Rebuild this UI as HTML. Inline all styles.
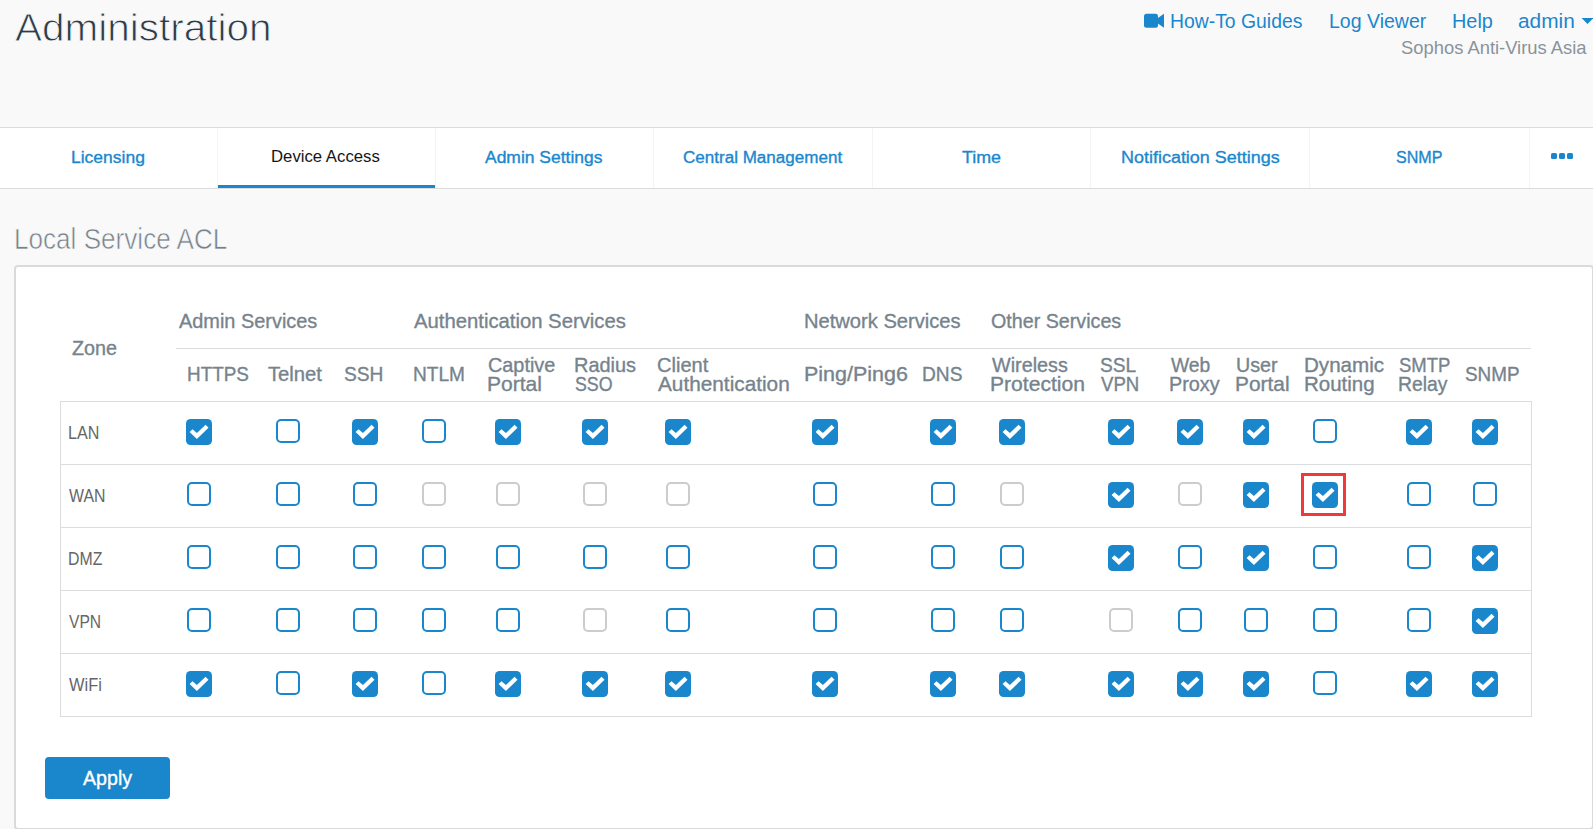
<!DOCTYPE html>
<html><head><meta charset="utf-8"><title>Administration - Device Access</title>
<style>
html,body{margin:0;padding:0;}
body{width:1593px;height:829px;overflow:hidden;position:relative;background:#f9f9f9;font-family:"Liberation Sans",sans-serif;}
.t{position:absolute;line-height:1;white-space:nowrap;transform-origin:0 0;}
.hdr-line{position:absolute;left:0;top:127px;width:1593px;height:1px;background:#dcdcdc;}
.tabs{position:absolute;left:0;top:128px;width:1593px;height:60px;background:#fff;}
.tabs-b{position:absolute;left:0;top:188px;width:1593px;height:1px;background:#dcdcdc;}
.sep{position:absolute;top:128px;width:1px;height:60px;background:#f4f4f4;}
.active{position:absolute;left:218px;top:185px;width:217px;height:3px;background:#1a87cd;}
.dot{position:absolute;top:153px;width:6px;height:6px;border-radius:1.5px;background:#1a87cd;}
.panel{position:absolute;left:14px;top:265px;width:1576px;height:561px;border:2px solid #d8dbde;border-radius:4px;background:#fff;}
.gl{position:absolute;left:176px;top:348px;width:1355px;height:1px;background:#d9dde0;}
.tbl{position:absolute;left:60px;top:401px;width:1470px;height:314px;border:1px solid #d9dde0;}
.rl{position:absolute;left:61px;width:1470px;height:1px;background:#d9dde0;}
.cb{position:absolute;display:block;}
.ub{position:absolute;width:20px;height:20px;border:2px solid #1a87cd;border-radius:5px;box-sizing:content-box;}
.red{position:absolute;left:1301px;top:473px;width:39px;height:37px;border:3px solid #f03a3a;}
.btn{position:absolute;left:45px;top:757px;width:125px;height:42px;border-radius:4px;background:#1a87cd;}
</style></head><body>
<div class="hdr-line"></div>
<div class="tabs"></div>
<div class="sep" style="left:217px"></div><div class="sep" style="left:435px"></div><div class="sep" style="left:653px"></div><div class="sep" style="left:872px"></div><div class="sep" style="left:1090px"></div><div class="sep" style="left:1309px"></div><div class="sep" style="left:1529px"></div>
<div class="tabs-b"></div>
<div class="active"></div>
<div class="dot" style="left:1551px"></div><div class="dot" style="left:1559px"></div><div class="dot" style="left:1567px"></div>
<svg style="position:absolute;left:0;top:0" width="1593" height="40"><rect x="1144" y="13.8" width="14" height="14" rx="2.5" fill="#1a87cd"/><polygon points="1157.5,18.3 1164,13.8 1164,27.8 1157.5,23.2" fill="#1a87cd"/><polygon points="1581.6,18.1 1593.4,18.1 1587.5,24.1" fill="#1a87cd"/></svg>
<div class="panel"></div>
<div class="gl"></div>
<div class="tbl"></div>
<div class="rl" style="top:464px"></div><div class="rl" style="top:527px"></div><div class="rl" style="top:590px"></div><div class="rl" style="top:653px"></div>
<svg class="cb" style="left:186px;top:419px" width="26" height="26" viewBox="0 0 26 26"><rect x="0" y="0" width="26" height="26" rx="4.6" fill="#1a87cd"/><polygon points="3.6,13.1 6.5,10.2 10.9,14.0 19.6,5.8 22.5,8.7 10.9,20.1" fill="#fff"/></svg>
<div class="ub" style="left:276px;top:419px;border-color:#1a87cd"></div>
<svg class="cb" style="left:352px;top:419px" width="26" height="26" viewBox="0 0 26 26"><rect x="0" y="0" width="26" height="26" rx="4.6" fill="#1a87cd"/><polygon points="3.6,13.1 6.5,10.2 10.9,14.0 19.6,5.8 22.5,8.7 10.9,20.1" fill="#fff"/></svg>
<div class="ub" style="left:422px;top:419px;border-color:#1a87cd"></div>
<svg class="cb" style="left:495px;top:419px" width="26" height="26" viewBox="0 0 26 26"><rect x="0" y="0" width="26" height="26" rx="4.6" fill="#1a87cd"/><polygon points="3.6,13.1 6.5,10.2 10.9,14.0 19.6,5.8 22.5,8.7 10.9,20.1" fill="#fff"/></svg>
<svg class="cb" style="left:582px;top:419px" width="26" height="26" viewBox="0 0 26 26"><rect x="0" y="0" width="26" height="26" rx="4.6" fill="#1a87cd"/><polygon points="3.6,13.1 6.5,10.2 10.9,14.0 19.6,5.8 22.5,8.7 10.9,20.1" fill="#fff"/></svg>
<svg class="cb" style="left:665px;top:419px" width="26" height="26" viewBox="0 0 26 26"><rect x="0" y="0" width="26" height="26" rx="4.6" fill="#1a87cd"/><polygon points="3.6,13.1 6.5,10.2 10.9,14.0 19.6,5.8 22.5,8.7 10.9,20.1" fill="#fff"/></svg>
<svg class="cb" style="left:812px;top:419px" width="26" height="26" viewBox="0 0 26 26"><rect x="0" y="0" width="26" height="26" rx="4.6" fill="#1a87cd"/><polygon points="3.6,13.1 6.5,10.2 10.9,14.0 19.6,5.8 22.5,8.7 10.9,20.1" fill="#fff"/></svg>
<svg class="cb" style="left:930px;top:419px" width="26" height="26" viewBox="0 0 26 26"><rect x="0" y="0" width="26" height="26" rx="4.6" fill="#1a87cd"/><polygon points="3.6,13.1 6.5,10.2 10.9,14.0 19.6,5.8 22.5,8.7 10.9,20.1" fill="#fff"/></svg>
<svg class="cb" style="left:999px;top:419px" width="26" height="26" viewBox="0 0 26 26"><rect x="0" y="0" width="26" height="26" rx="4.6" fill="#1a87cd"/><polygon points="3.6,13.1 6.5,10.2 10.9,14.0 19.6,5.8 22.5,8.7 10.9,20.1" fill="#fff"/></svg>
<svg class="cb" style="left:1108px;top:419px" width="26" height="26" viewBox="0 0 26 26"><rect x="0" y="0" width="26" height="26" rx="4.6" fill="#1a87cd"/><polygon points="3.6,13.1 6.5,10.2 10.9,14.0 19.6,5.8 22.5,8.7 10.9,20.1" fill="#fff"/></svg>
<svg class="cb" style="left:1177px;top:419px" width="26" height="26" viewBox="0 0 26 26"><rect x="0" y="0" width="26" height="26" rx="4.6" fill="#1a87cd"/><polygon points="3.6,13.1 6.5,10.2 10.9,14.0 19.6,5.8 22.5,8.7 10.9,20.1" fill="#fff"/></svg>
<svg class="cb" style="left:1243px;top:419px" width="26" height="26" viewBox="0 0 26 26"><rect x="0" y="0" width="26" height="26" rx="4.6" fill="#1a87cd"/><polygon points="3.6,13.1 6.5,10.2 10.9,14.0 19.6,5.8 22.5,8.7 10.9,20.1" fill="#fff"/></svg>
<div class="ub" style="left:1313px;top:419px;border-color:#1a87cd"></div>
<svg class="cb" style="left:1406px;top:419px" width="26" height="26" viewBox="0 0 26 26"><rect x="0" y="0" width="26" height="26" rx="4.6" fill="#1a87cd"/><polygon points="3.6,13.1 6.5,10.2 10.9,14.0 19.6,5.8 22.5,8.7 10.9,20.1" fill="#fff"/></svg>
<svg class="cb" style="left:1472px;top:419px" width="26" height="26" viewBox="0 0 26 26"><rect x="0" y="0" width="26" height="26" rx="4.6" fill="#1a87cd"/><polygon points="3.6,13.1 6.5,10.2 10.9,14.0 19.6,5.8 22.5,8.7 10.9,20.1" fill="#fff"/></svg>
<div class="ub" style="left:187px;top:482px;border-color:#1a87cd"></div>
<div class="ub" style="left:276px;top:482px;border-color:#1a87cd"></div>
<div class="ub" style="left:353px;top:482px;border-color:#1a87cd"></div>
<div class="ub" style="left:422px;top:482px;border-color:#cccccc"></div>
<div class="ub" style="left:496px;top:482px;border-color:#cccccc"></div>
<div class="ub" style="left:583px;top:482px;border-color:#cccccc"></div>
<div class="ub" style="left:666px;top:482px;border-color:#cccccc"></div>
<div class="ub" style="left:813px;top:482px;border-color:#1a87cd"></div>
<div class="ub" style="left:931px;top:482px;border-color:#1a87cd"></div>
<div class="ub" style="left:1000px;top:482px;border-color:#cccccc"></div>
<svg class="cb" style="left:1108px;top:482px" width="26" height="26" viewBox="0 0 26 26"><rect x="0" y="0" width="26" height="26" rx="4.6" fill="#1a87cd"/><polygon points="3.6,13.1 6.5,10.2 10.9,14.0 19.6,5.8 22.5,8.7 10.9,20.1" fill="#fff"/></svg>
<div class="ub" style="left:1178px;top:482px;border-color:#cccccc"></div>
<svg class="cb" style="left:1243px;top:482px" width="26" height="26" viewBox="0 0 26 26"><rect x="0" y="0" width="26" height="26" rx="4.6" fill="#1a87cd"/><polygon points="3.6,13.1 6.5,10.2 10.9,14.0 19.6,5.8 22.5,8.7 10.9,20.1" fill="#fff"/></svg>
<svg class="cb" style="left:1312px;top:482px" width="26" height="26" viewBox="0 0 26 26"><rect x="0" y="0" width="26" height="26" rx="4.6" fill="#1a87cd"/><polygon points="3.6,13.1 6.5,10.2 10.9,14.0 19.6,5.8 22.5,8.7 10.9,20.1" fill="#fff"/></svg>
<div class="ub" style="left:1407px;top:482px;border-color:#1a87cd"></div>
<div class="ub" style="left:1473px;top:482px;border-color:#1a87cd"></div>
<div class="ub" style="left:187px;top:545px;border-color:#1a87cd"></div>
<div class="ub" style="left:276px;top:545px;border-color:#1a87cd"></div>
<div class="ub" style="left:353px;top:545px;border-color:#1a87cd"></div>
<div class="ub" style="left:422px;top:545px;border-color:#1a87cd"></div>
<div class="ub" style="left:496px;top:545px;border-color:#1a87cd"></div>
<div class="ub" style="left:583px;top:545px;border-color:#1a87cd"></div>
<div class="ub" style="left:666px;top:545px;border-color:#1a87cd"></div>
<div class="ub" style="left:813px;top:545px;border-color:#1a87cd"></div>
<div class="ub" style="left:931px;top:545px;border-color:#1a87cd"></div>
<div class="ub" style="left:1000px;top:545px;border-color:#1a87cd"></div>
<svg class="cb" style="left:1108px;top:545px" width="26" height="26" viewBox="0 0 26 26"><rect x="0" y="0" width="26" height="26" rx="4.6" fill="#1a87cd"/><polygon points="3.6,13.1 6.5,10.2 10.9,14.0 19.6,5.8 22.5,8.7 10.9,20.1" fill="#fff"/></svg>
<div class="ub" style="left:1178px;top:545px;border-color:#1a87cd"></div>
<svg class="cb" style="left:1243px;top:545px" width="26" height="26" viewBox="0 0 26 26"><rect x="0" y="0" width="26" height="26" rx="4.6" fill="#1a87cd"/><polygon points="3.6,13.1 6.5,10.2 10.9,14.0 19.6,5.8 22.5,8.7 10.9,20.1" fill="#fff"/></svg>
<div class="ub" style="left:1313px;top:545px;border-color:#1a87cd"></div>
<div class="ub" style="left:1407px;top:545px;border-color:#1a87cd"></div>
<svg class="cb" style="left:1472px;top:545px" width="26" height="26" viewBox="0 0 26 26"><rect x="0" y="0" width="26" height="26" rx="4.6" fill="#1a87cd"/><polygon points="3.6,13.1 6.5,10.2 10.9,14.0 19.6,5.8 22.5,8.7 10.9,20.1" fill="#fff"/></svg>
<div class="ub" style="left:187px;top:608px;border-color:#1a87cd"></div>
<div class="ub" style="left:276px;top:608px;border-color:#1a87cd"></div>
<div class="ub" style="left:353px;top:608px;border-color:#1a87cd"></div>
<div class="ub" style="left:422px;top:608px;border-color:#1a87cd"></div>
<div class="ub" style="left:496px;top:608px;border-color:#1a87cd"></div>
<div class="ub" style="left:583px;top:608px;border-color:#cccccc"></div>
<div class="ub" style="left:666px;top:608px;border-color:#1a87cd"></div>
<div class="ub" style="left:813px;top:608px;border-color:#1a87cd"></div>
<div class="ub" style="left:931px;top:608px;border-color:#1a87cd"></div>
<div class="ub" style="left:1000px;top:608px;border-color:#1a87cd"></div>
<div class="ub" style="left:1109px;top:608px;border-color:#cccccc"></div>
<div class="ub" style="left:1178px;top:608px;border-color:#1a87cd"></div>
<div class="ub" style="left:1244px;top:608px;border-color:#1a87cd"></div>
<div class="ub" style="left:1313px;top:608px;border-color:#1a87cd"></div>
<div class="ub" style="left:1407px;top:608px;border-color:#1a87cd"></div>
<svg class="cb" style="left:1472px;top:608px" width="26" height="26" viewBox="0 0 26 26"><rect x="0" y="0" width="26" height="26" rx="4.6" fill="#1a87cd"/><polygon points="3.6,13.1 6.5,10.2 10.9,14.0 19.6,5.8 22.5,8.7 10.9,20.1" fill="#fff"/></svg>
<svg class="cb" style="left:186px;top:671px" width="26" height="26" viewBox="0 0 26 26"><rect x="0" y="0" width="26" height="26" rx="4.6" fill="#1a87cd"/><polygon points="3.6,13.1 6.5,10.2 10.9,14.0 19.6,5.8 22.5,8.7 10.9,20.1" fill="#fff"/></svg>
<div class="ub" style="left:276px;top:671px;border-color:#1a87cd"></div>
<svg class="cb" style="left:352px;top:671px" width="26" height="26" viewBox="0 0 26 26"><rect x="0" y="0" width="26" height="26" rx="4.6" fill="#1a87cd"/><polygon points="3.6,13.1 6.5,10.2 10.9,14.0 19.6,5.8 22.5,8.7 10.9,20.1" fill="#fff"/></svg>
<div class="ub" style="left:422px;top:671px;border-color:#1a87cd"></div>
<svg class="cb" style="left:495px;top:671px" width="26" height="26" viewBox="0 0 26 26"><rect x="0" y="0" width="26" height="26" rx="4.6" fill="#1a87cd"/><polygon points="3.6,13.1 6.5,10.2 10.9,14.0 19.6,5.8 22.5,8.7 10.9,20.1" fill="#fff"/></svg>
<svg class="cb" style="left:582px;top:671px" width="26" height="26" viewBox="0 0 26 26"><rect x="0" y="0" width="26" height="26" rx="4.6" fill="#1a87cd"/><polygon points="3.6,13.1 6.5,10.2 10.9,14.0 19.6,5.8 22.5,8.7 10.9,20.1" fill="#fff"/></svg>
<svg class="cb" style="left:665px;top:671px" width="26" height="26" viewBox="0 0 26 26"><rect x="0" y="0" width="26" height="26" rx="4.6" fill="#1a87cd"/><polygon points="3.6,13.1 6.5,10.2 10.9,14.0 19.6,5.8 22.5,8.7 10.9,20.1" fill="#fff"/></svg>
<svg class="cb" style="left:812px;top:671px" width="26" height="26" viewBox="0 0 26 26"><rect x="0" y="0" width="26" height="26" rx="4.6" fill="#1a87cd"/><polygon points="3.6,13.1 6.5,10.2 10.9,14.0 19.6,5.8 22.5,8.7 10.9,20.1" fill="#fff"/></svg>
<svg class="cb" style="left:930px;top:671px" width="26" height="26" viewBox="0 0 26 26"><rect x="0" y="0" width="26" height="26" rx="4.6" fill="#1a87cd"/><polygon points="3.6,13.1 6.5,10.2 10.9,14.0 19.6,5.8 22.5,8.7 10.9,20.1" fill="#fff"/></svg>
<svg class="cb" style="left:999px;top:671px" width="26" height="26" viewBox="0 0 26 26"><rect x="0" y="0" width="26" height="26" rx="4.6" fill="#1a87cd"/><polygon points="3.6,13.1 6.5,10.2 10.9,14.0 19.6,5.8 22.5,8.7 10.9,20.1" fill="#fff"/></svg>
<svg class="cb" style="left:1108px;top:671px" width="26" height="26" viewBox="0 0 26 26"><rect x="0" y="0" width="26" height="26" rx="4.6" fill="#1a87cd"/><polygon points="3.6,13.1 6.5,10.2 10.9,14.0 19.6,5.8 22.5,8.7 10.9,20.1" fill="#fff"/></svg>
<svg class="cb" style="left:1177px;top:671px" width="26" height="26" viewBox="0 0 26 26"><rect x="0" y="0" width="26" height="26" rx="4.6" fill="#1a87cd"/><polygon points="3.6,13.1 6.5,10.2 10.9,14.0 19.6,5.8 22.5,8.7 10.9,20.1" fill="#fff"/></svg>
<svg class="cb" style="left:1243px;top:671px" width="26" height="26" viewBox="0 0 26 26"><rect x="0" y="0" width="26" height="26" rx="4.6" fill="#1a87cd"/><polygon points="3.6,13.1 6.5,10.2 10.9,14.0 19.6,5.8 22.5,8.7 10.9,20.1" fill="#fff"/></svg>
<div class="ub" style="left:1313px;top:671px;border-color:#1a87cd"></div>
<svg class="cb" style="left:1406px;top:671px" width="26" height="26" viewBox="0 0 26 26"><rect x="0" y="0" width="26" height="26" rx="4.6" fill="#1a87cd"/><polygon points="3.6,13.1 6.5,10.2 10.9,14.0 19.6,5.8 22.5,8.7 10.9,20.1" fill="#fff"/></svg>
<svg class="cb" style="left:1472px;top:671px" width="26" height="26" viewBox="0 0 26 26"><rect x="0" y="0" width="26" height="26" rx="4.6" fill="#1a87cd"/><polygon points="3.6,13.1 6.5,10.2 10.9,14.0 19.6,5.8 22.5,8.7 10.9,20.1" fill="#fff"/></svg>
<div class="red"></div>
<div class="btn"></div>
<div class="t" style="left:14.80px;top:9px;font-size:38.84px;color:#2b3c4a;transform:scaleX(1.0426);-webkit-text-stroke:0.9px #f9f9f9;">Administration</div>
<div class="t" style="left:1170.05px;top:12px;font-size:19.86px;color:#1a87cd;transform:scaleX(0.9750);">How-To Guides</div>
<div class="t" style="left:1328.74px;top:12px;font-size:19.71px;color:#1a87cd;transform:scaleX(0.9915);">Log Viewer</div>
<div class="t" style="left:1451.71px;top:12px;font-size:19.71px;color:#1a87cd;transform:scaleX(1.0092);">Help</div>
<div class="t" style="left:1517.67px;top:12px;font-size:19.71px;color:#1a87cd;transform:scaleX(1.0582);">admin</div>
<div class="t" style="left:1401.16px;top:39px;font-size:18.55px;color:#89939b;transform:scaleX(0.9915);">Sophos Anti-Virus Asia</div>
<div class="t" style="left:71.20px;top:149px;font-size:17.25px;color:#1a87cd;transform:scaleX(1.0139);-webkit-text-stroke:0.35px;">Licensing</div>
<div class="t" style="left:271.36px;top:148px;font-size:17.10px;color:#151515;transform:scaleX(0.9786);">Device Access</div>
<div class="t" style="left:485.30px;top:149px;font-size:17.25px;color:#1a87cd;transform:scaleX(1.0123);-webkit-text-stroke:0.35px;">Admin Settings</div>
<div class="t" style="left:682.75px;top:149px;font-size:17.25px;color:#1a87cd;transform:scaleX(0.9880);-webkit-text-stroke:0.35px;">Central Management</div>
<div class="t" style="left:962.14px;top:149px;font-size:17.25px;color:#1a87cd;transform:scaleX(1.0350);-webkit-text-stroke:0.35px;">Time</div>
<div class="t" style="left:1120.86px;top:149px;font-size:17.25px;color:#1a87cd;transform:scaleX(1.0410);-webkit-text-stroke:0.35px;">Notification Settings</div>
<div class="t" style="left:1396.36px;top:149px;font-size:17.25px;color:#1a87cd;transform:scaleX(0.9312);-webkit-text-stroke:0.35px;">SNMP</div>
<div class="t" style="left:13.81px;top:225px;font-size:28.99px;color:#75828c;transform:scaleX(0.9007);-webkit-text-stroke:0.6px #f9f9f9;">Local Service ACL</div>
<div class="t" style="left:71.71px;top:338px;font-size:20.43px;color:#76838d;transform:scaleX(0.9663);-webkit-text-stroke:0.35px;">Zone</div>
<div class="t" style="left:179.20px;top:310px;font-size:21.01px;color:#76838d;transform:scaleX(0.9480);-webkit-text-stroke:0.35px;">Admin Services</div>
<div class="t" style="left:414.30px;top:310px;font-size:21.01px;color:#76838d;transform:scaleX(0.9654);-webkit-text-stroke:0.35px;">Authentication Services</div>
<div class="t" style="left:803.79px;top:310px;font-size:21.01px;color:#76838d;transform:scaleX(0.9586);-webkit-text-stroke:0.35px;">Network Services</div>
<div class="t" style="left:991.41px;top:310px;font-size:21.01px;color:#76838d;transform:scaleX(0.9374);-webkit-text-stroke:0.35px;">Other Services</div>
<div class="t" style="left:187.19px;top:364px;font-size:20.29px;color:#76838d;transform:scaleX(0.9309);-webkit-text-stroke:0.35px;">HTTPS</div>
<div class="t" style="left:267.90px;top:364px;font-size:20.29px;color:#76838d;transform:scaleX(0.9966);-webkit-text-stroke:0.35px;">Telnet</div>
<div class="t" style="left:344.43px;top:364px;font-size:20.29px;color:#76838d;transform:scaleX(0.9457);-webkit-text-stroke:0.35px;">SSH</div>
<div class="t" style="left:413.27px;top:364px;font-size:20.29px;color:#76838d;transform:scaleX(0.9400);-webkit-text-stroke:0.35px;">NTLM</div>
<div class="t" style="left:803.98px;top:364px;font-size:20.29px;color:#76838d;transform:scaleX(1.0586);-webkit-text-stroke:0.35px;">Ping/Ping6</div>
<div class="t" style="left:922.07px;top:364px;font-size:20.29px;color:#76838d;transform:scaleX(0.9440);-webkit-text-stroke:0.35px;">DNS</div>
<div class="t" style="left:1464.54px;top:364px;font-size:20.29px;color:#76838d;transform:scaleX(0.9304);-webkit-text-stroke:0.35px;">SNMP</div>
<div class="t" style="left:487.61px;top:355px;font-size:20.29px;color:#76838d;transform:scaleX(0.9784);-webkit-text-stroke:0.35px;">Captive</div>
<div class="t" style="left:486.92px;top:374px;font-size:20.29px;color:#76838d;transform:scaleX(1.0375);-webkit-text-stroke:0.35px;">Portal</div>
<div class="t" style="left:574.11px;top:355px;font-size:20.29px;color:#76838d;transform:scaleX(0.9815);-webkit-text-stroke:0.35px;">Radius</div>
<div class="t" style="left:574.99px;top:374px;font-size:20.29px;color:#76838d;transform:scaleX(0.8766);-webkit-text-stroke:0.35px;">SSO</div>
<div class="t" style="left:657.40px;top:355px;font-size:20.29px;color:#76838d;transform:scaleX(0.9881);-webkit-text-stroke:0.35px;">Client</div>
<div class="t" style="left:658.40px;top:374px;font-size:20.29px;color:#76838d;transform:scaleX(1.0247);-webkit-text-stroke:0.35px;">Authentication</div>
<div class="t" style="left:992.10px;top:355px;font-size:20.29px;color:#76838d;transform:scaleX(0.9757);-webkit-text-stroke:0.35px;">Wireless</div>
<div class="t" style="left:990.41px;top:374px;font-size:20.29px;color:#76838d;transform:scaleX(1.0396);-webkit-text-stroke:0.35px;">Protection</div>
<div class="t" style="left:1100.33px;top:355px;font-size:20.29px;color:#76838d;transform:scaleX(0.9430);-webkit-text-stroke:0.35px;">SSL</div>
<div class="t" style="left:1101.10px;top:374px;font-size:20.29px;color:#76838d;transform:scaleX(0.9167);-webkit-text-stroke:0.35px;">VPN</div>
<div class="t" style="left:1170.50px;top:355px;font-size:20.29px;color:#76838d;transform:scaleX(0.9503);-webkit-text-stroke:0.35px;">Web</div>
<div class="t" style="left:1168.91px;top:374px;font-size:20.29px;color:#76838d;transform:scaleX(0.9773);-webkit-text-stroke:0.35px;">Proxy</div>
<div class="t" style="left:1235.52px;top:355px;font-size:20.29px;color:#76838d;transform:scaleX(0.9720);-webkit-text-stroke:0.35px;">User</div>
<div class="t" style="left:1235.23px;top:374px;font-size:20.29px;color:#76838d;transform:scaleX(1.0296);-webkit-text-stroke:0.35px;">Portal</div>
<div class="t" style="left:1304.15px;top:355px;font-size:20.29px;color:#76838d;transform:scaleX(1.0144);-webkit-text-stroke:0.35px;">Dynamic</div>
<div class="t" style="left:1304.16px;top:374px;font-size:20.29px;color:#76838d;transform:scaleX(1.0108);-webkit-text-stroke:0.35px;">Routing</div>
<div class="t" style="left:1398.96px;top:355px;font-size:20.29px;color:#76838d;transform:scaleX(0.9121);-webkit-text-stroke:0.35px;">SMTP</div>
<div class="t" style="left:1398.15px;top:374px;font-size:20.29px;color:#76838d;transform:scaleX(0.9552);-webkit-text-stroke:0.35px;">Relay</div>
<div class="t" style="left:68.21px;top:425px;font-size:17.68px;color:#666666;transform:scaleX(0.9115);">LAN</div>
<div class="t" style="left:69.30px;top:488px;font-size:17.68px;color:#666666;transform:scaleX(0.8978);">WAN</div>
<div class="t" style="left:68.03px;top:551px;font-size:17.68px;color:#666666;transform:scaleX(0.8971);">DMZ</div>
<div class="t" style="left:69.30px;top:614px;font-size:17.68px;color:#666666;transform:scaleX(0.8837);">VPN</div>
<div class="t" style="left:69.30px;top:677px;font-size:17.68px;color:#666666;transform:scaleX(0.9286);">WiFi</div>
<div class="t" style="left:82.60px;top:768px;font-size:20.72px;color:#ffffff;transform:scaleX(0.9490);-webkit-text-stroke:0.35px;">Apply</div>
</body></html>
